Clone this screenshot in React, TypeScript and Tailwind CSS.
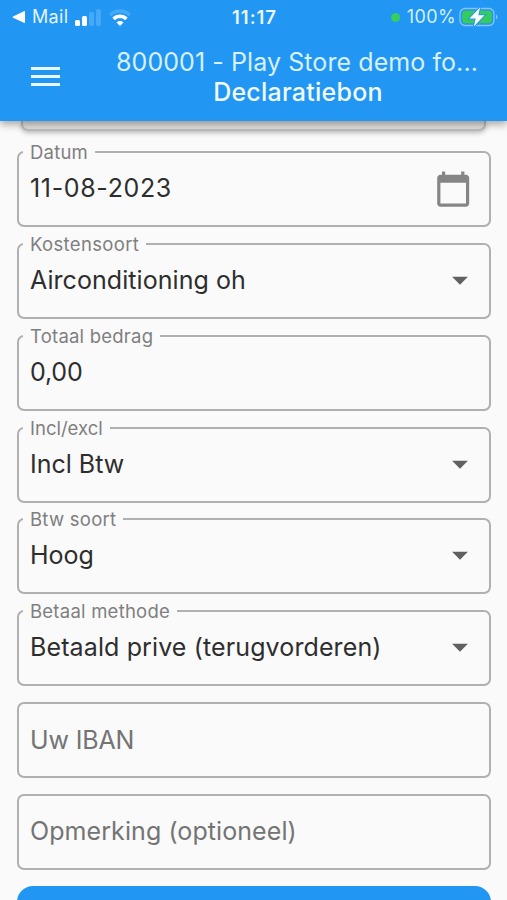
import type { ReactNode } from 'react';

const CalendarIcon = () => (
  <svg viewBox="0 0 24 24" className="size-[38.4px] shrink-0 fill-[#858585]">
    <path d="M20 3h-1V1h-2v2H7V1H5v2H4c-1.100 0-2 .9-2 2v16c0 1.100.9 2 2 2h16c1.100 0 2-.9 2-2V5c0-1.100-.9-2-2-2zm0 18H4V8h16v13z" />
  </svg>
);

const DropIcon = () => (
  <svg viewBox="0 0 24 24" className="mb-[2px] mr-[-7px] size-[38px] shrink-0 fill-[#616161]">
    <path d="M7 10l5 5 5-5z" />
  </svg>
);

type FieldProps = {
  label?: string;
  labelSpacing?: string;
  value?: string;
  spacing?: string;
  placeholder?: string;
  icon?: ReactNode;
};

function Field({ label, labelSpacing = '', value, spacing = '', placeholder, icon }: FieldProps) {
  return (
    <fieldset className="h-[76px] shrink-0 rounded-[7px] border-2 border-[#b0b0b0] pl-[4px] pr-[17px]">
      {label && (
        <legend className={`h-0 whitespace-nowrap pl-[7px] pr-[7px] text-[18.5px] leading-[0px] text-[#7f7f7f] ${labelSpacing}`}>
          {label}
        </legend>
      )}
      <div className="flex h-[72px] items-center justify-between pl-[7px]">
        {value ? (
          <span className={`mb-[2px] whitespace-nowrap text-[25px] leading-[30px] text-[#2e2e2e] ${spacing}`}>{value}</span>
        ) : (
          <span className={`mb-px whitespace-nowrap text-[25px] leading-[30px] text-[#747474] ${spacing}`}>{placeholder}</span>
        )}
        {icon}
      </div>
    </fieldset>
  );
}

function StatusBar() {
  return (
    <div className="flex h-[34px] items-center pl-3 pr-[8px]">
      <div className="flex flex-1 items-center">
        <svg viewBox="0 0 13 12" className="h-3 w-[13px] fill-white">
          <path d="M13 .8v10.400c0 .6-.6.8-1.100.6L1 6.700c-.6-.3-.6-1 0-1.300L11.900.2c.5-.3 1.100 0 1.100.6z" />
        </svg>
        <span className="ml-[7px] w-[36px] whitespace-nowrap text-[18px] leading-5 tracking-[0.3px] text-[#e3f4ff]">Mail</span>
        <div className="ml-[7px] flex h-[17px] items-end gap-[2px]">
          <i className="h-[6px] w-[5px] rounded-[1.5px] bg-white" />
          <i className="h-[10px] w-[5px] rounded-[1.5px] bg-white" />
          <i className="h-[14px] w-[5px] rounded-[1.5px] bg-[#46a8f8]" />
          <i className="h-[17px] w-[5px] rounded-[1.5px] bg-[#46a8f8]" />
        </div>
        <svg viewBox="0 0 22 17" className="ml-[8px] h-[17px] w-[22px] fill-none" strokeWidth="3.500">
          <path d="M1.200 6a14 14 0 0 1 19.600 0" stroke="#46a8f8" />
          <path d="M4.600 10a9 9 0 0 1 12.800 0" stroke="white" />
          <path d="M11 17l-3.500-3.500a4.900 4.900 0 0 1 7 0z" fill="white" />
        </svg>
      </div>
      <span className="-ml-[2px] text-[18.500px] font-semibold leading-5 tracking-[1px] text-[#e9f8ff]">11:17</span>
      <div className="flex flex-1 items-center justify-end">
        <i className="size-[9px] rounded-full bg-[#34cf5e]" />
        <span className="ml-[7px] whitespace-nowrap text-[18px] leading-5 tracking-[0.400px] text-[#d6f0ff]">100%</span>
        <svg viewBox="0 0 40 20" className="ml-[3px] h-5 w-10">
          <rect x="1" y="1.500" width="34" height="17" rx="5" fill="none" stroke="#85c5fa" strokeWidth="1.300" />
          <rect x="3.200" y="3.700" width="29.600" height="12.600" rx="3" fill="#35cc5b" />
          <path d="M37 7.500c2 .8 2 4.200 0 5z" fill="#85c5fa" />
          <path d="M21 .5L10.500 11.500h6.200L14.800 19.500 25.500 8.300h-6.200z" fill="white" stroke="#2196f3" strokeWidth="2" paintOrder="stroke" />
        </svg>
      </div>
    </div>
  );
}

export default function App() {
  return (
    <div className="flex h-[900px] w-[507px] flex-col overflow-hidden bg-[#fafafa] font-['Inter','Liberation_Sans',sans-serif]">
      <header className="relative z-10 h-[121px] shrink-0 bg-[#2196f3] shadow-[0_3px_8px_rgba(0,0,0,0.36)]">
        <StatusBar />
        <div className="flex items-start">
          <button aria-label="Menu" className="ml-[31px] mt-[33px] flex w-[29px] flex-col gap-[5px]">
            <i className="h-[3px] w-full bg-[#e9f8ff]" />
            <i className="h-[3px] w-full bg-[#e9f8ff]" />
            <i className="h-[3px] w-full bg-[#e9f8ff]" />
          </button>
          <div className="ml-[48px] mt-[13px] w-[378px] text-center text-[25px] leading-[30px] text-[#d8f0ff]">
            <div className="whitespace-nowrap tracking-[0.080px]">800001 - Play Store demo fo...</div>
            <div className="whitespace-nowrap pl-[2px] font-medium tracking-[0.250px] text-[#f0faff]">Declaratiebon</div>
          </div>
        </div>
      </header>
      <main className="flex flex-col pl-[17px] pr-4">
        <div className="ml-[4px] mr-[5px] h-[10px] shrink-0 rounded-b-[7px] border-2 border-t-0 border-[#bdbdbd] bg-[#e0e0e0] shadow-[0_2px_5px_rgba(0,0,0,0.25)]" />
        <div className="mt-[20.300px] flex flex-col gap-[15.800px]">
          <Field label="Datum" labelSpacing="tracking-[0.200px]" value="11-08-2023" spacing="tracking-[0.650px]" icon={<CalendarIcon />} />
          <Field label="Kostensoort" labelSpacing="tracking-[0.340px]" value="Airconditioning oh" spacing="tracking-[0.060px]" icon={<DropIcon />} />
          <Field label="Totaal bedrag" labelSpacing="tracking-[0.220px]" value="0,00" spacing="tracking-[-0.200px]" />
          <Field label="Incl/excl" value="Incl Btw" icon={<DropIcon />} />
          <Field label="Btw soort" labelSpacing="tracking-[0.250px]" value="Hoog" icon={<DropIcon />} />
          <Field label="Betaal methode" labelSpacing="tracking-[0.240px]" value="Betaald prive (terugvorderen)" spacing="tracking-[0.120px]" icon={<DropIcon />} />
          <Field placeholder="Uw IBAN" spacing="tracking-[-0.150px]" />
          <Field placeholder="Opmerking (optioneel)" spacing="tracking-[0.080px]" />
          <button aria-label="Opslaan" className="h-[76px] shrink-0 rounded-[16px] bg-[#2196f3]" />
        </div>
      </main>
    </div>
  );
}
